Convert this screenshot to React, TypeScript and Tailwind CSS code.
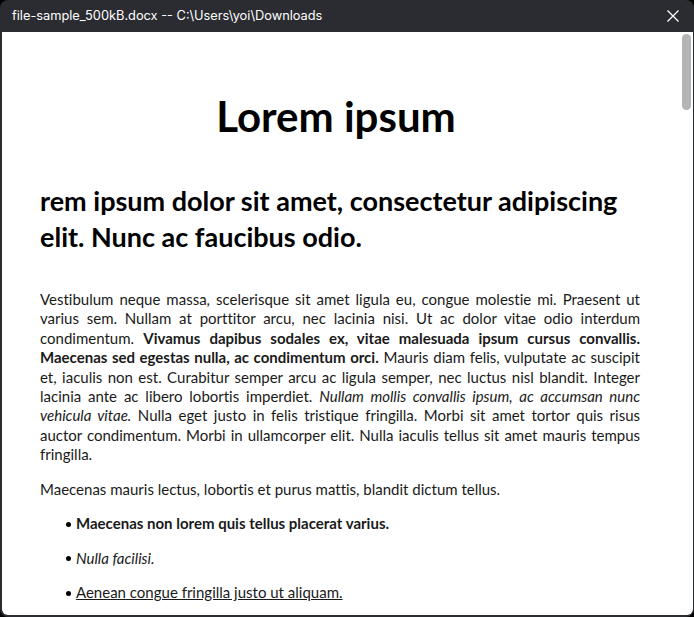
import React from 'react';

const body = '"Lato", "Noto Sans", sans-serif';

const J = 'block text-justify [text-align-last:justify]';

function Bullet({ children }: { children: React.ReactNode }) {
  return (
    <li className="flex items-center pl-[26px]">
      <span className="mr-[5px] mt-[1px] h-[5px] w-[5px] shrink-0 rounded-full bg-black" />
      {children}
    </li>
  );
}

export default function App() {
  return (
    <div className="h-[617px] w-[694px] overflow-hidden bg-black">
      <div className="flex h-full flex-col overflow-hidden rounded-[8px] bg-[#2b2c31]">
        {/* Title bar */}
        <div className="flex h-[32px] shrink-0 items-center justify-between pl-[12px] pr-[14px]">
          <span
            className="text-[12.8px] text-white"
            style={{ fontFamily: '"Inter", "Liberation Sans", sans-serif' }}
          >
            file-sample_500kB.docx -- C:\Users\yoi\Downloads
          </span>
          <svg width="14" height="14" viewBox="0 0 14 14" className="text-white">
            <path d="M1.5 1.5 L12.5 12.5 M12.5 1.5 L1.5 12.5" stroke="currentColor" strokeWidth="1.3" />
          </svg>
        </div>

        {/* Document */}
        <div className="relative mb-[2px] ml-[2px] mr-[1px] flex-1 overflow-hidden rounded-b-[6px] bg-white">
          <div className="absolute right-[2px] top-[2px] h-[76px] w-[9px] rounded-full bg-[#b4b4b4]" />
          <div
            className="w-[638px] pl-[38px] text-[#1a1a1a] [font-variant-ligatures:none]"
            style={{ fontFamily: body }}
          >
            <h1 className="pr-[8px] pt-[60px] text-center text-[42px] font-bold leading-[48px] text-black">
              Lorem ipsum
            </h1>
            <h2 className="mt-[43px] text-[27px] font-bold leading-[36px] text-black">
              rem ipsum dolor sit amet, consectetur adipiscing elit. Nunc ac faucibus odio.
            </h2>
            <p className="mt-[35px] text-[15px] leading-[19.4px]">
              <span className={J}>
                Vestibulum neque massa, scelerisque sit amet ligula eu, congue molestie mi. Praesent ut
              </span>
              <span className={J}>
                varius sem. Nullam at porttitor arcu, nec lacinia nisi. Ut ac dolor vitae odio interdum
              </span>
              <span className={J}>
                condimentum. <b>Vivamus dapibus sodales ex, vitae malesuada ipsum cursus convallis.</b>
              </span>
              <span className={J}>
                <b>Maecenas sed egestas nulla, ac condimentum orci.</b> Mauris diam felis, vulputate ac suscipit
              </span>
              <span className={J}>
                et, iaculis non est. Curabitur semper arcu ac ligula semper, nec luctus nisl blandit. Integer
              </span>
              <span className={J}>
                lacinia ante ac libero lobortis imperdiet. <i>Nullam mollis convallis ipsum, ac accumsan nunc</i>
              </span>
              <span className={J}>
                <i>vehicula vitae.</i> Nulla eget justo in felis tristique fringilla. Morbi sit amet tortor quis risus
              </span>
              <span className={J}>
                auctor condimentum. Morbi in ullamcorper elit. Nulla iaculis tellus sit amet mauris tempus
              </span>
              <span className="block">fringilla.</span>
            </p>
            <p className="mt-[15.6px] text-[15px] leading-[19.4px]">
              Maecenas mauris lectus, lobortis et purus mattis, blandit dictum tellus.
            </p>
            <ul className="mt-[14.5px] flex flex-col gap-[15px] text-[15px] leading-[19.4px]">
              <Bullet>
                <b>Maecenas non lorem quis tellus placerat varius.</b>
              </Bullet>
              <Bullet>
                <i>Nulla facilisi.</i>
              </Bullet>
              <Bullet>
                <u>Aenean congue fringilla justo ut aliquam. </u>
              </Bullet>
            </ul>
          </div>
        </div>
      </div>
    </div>
  );
}
